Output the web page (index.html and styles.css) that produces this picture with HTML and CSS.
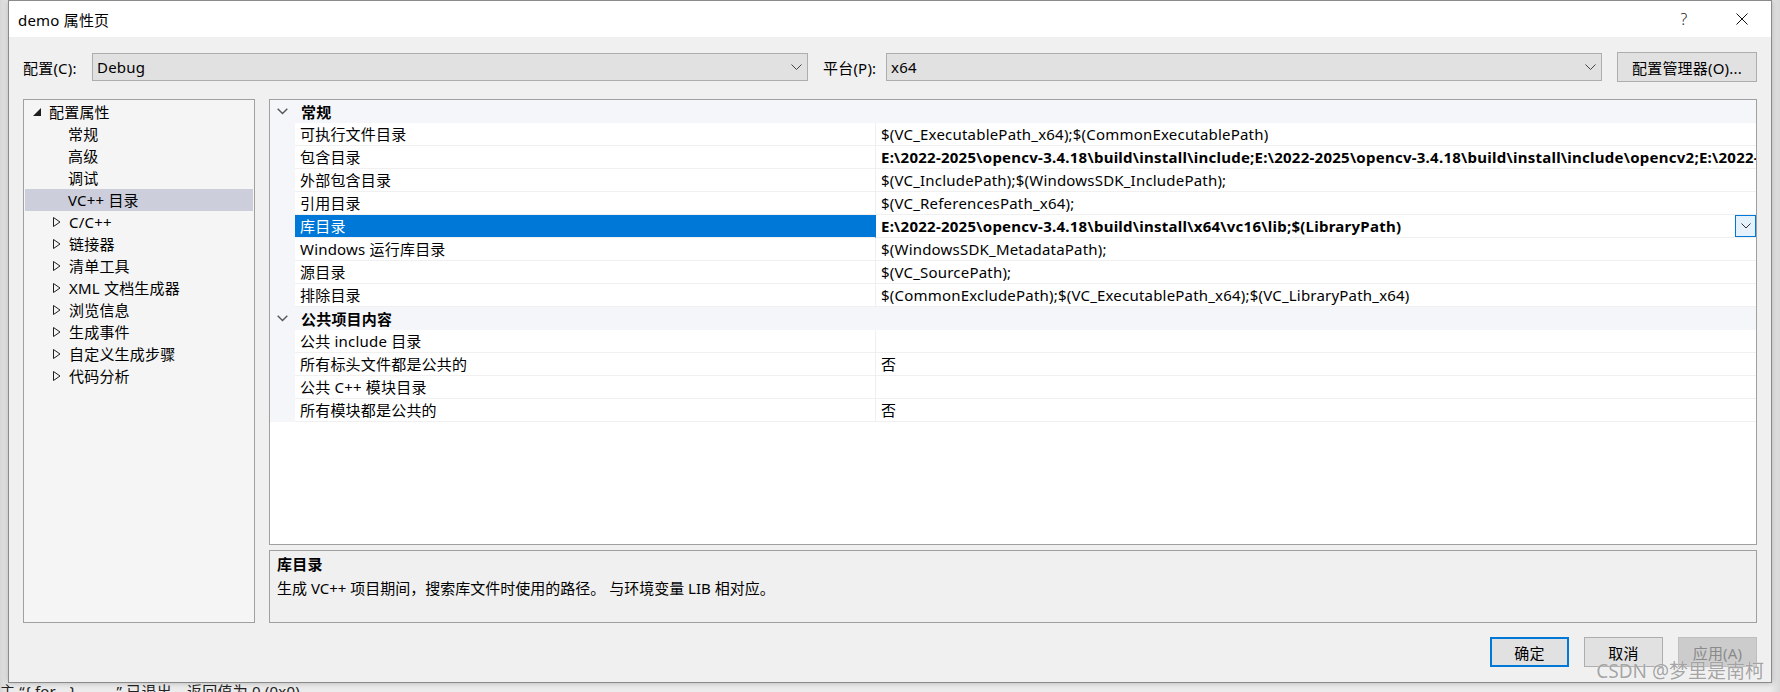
FILE: index.html
```html
<!DOCTYPE html>
<html lang="zh-CN">
<head>
<meta charset="utf-8">
<title>demo 属性页</title>
<link rel="stylesheet" href="styles.css">
</head>
<body>
<div class="screen">
  <div class="dialog">
    <div class="titlebar">
      <span class="title">demo 属性页</span>
      <div class="caption-btns">
        <span class="cap help">?</span>
        <span class="cap close"><svg width="12" height="12" viewBox="0 0 12 12"><path d="M0.5 0.5 L11.5 11.5 M11.5 0.5 L0.5 11.5" stroke="#111" stroke-width="1" fill="none"/></svg></span>
      </div>
    </div>
    <div class="body">
      <div class="toprow">
        <span class="lbl cfg">配置(C):</span>
        <div class="combo"><span>Debug</span><svg width="11" height="6" viewBox="0 0 11 6"><path d="M0.5 0.5 L5.5 5.5 L10.5 0.5" fill="none" stroke="#444" stroke-width="1"/></svg></div>
        <span class="lbl plat">平台(P):</span>
        <div class="combo"><span>x64</span><svg width="11" height="6" viewBox="0 0 11 6"><path d="M0.5 0.5 L5.5 5.5 L10.5 0.5" fill="none" stroke="#444" stroke-width="1"/></svg></div>
        <button class="btn mgr">配置管理器(O)...</button>
      </div>
      <div class="panes">
        <div class="tree">
          <div class="node lv0"><svg class="tri" width="8" height="8" viewBox="0 0 8 8"><path d="M8 0 L8 8 L0 8 Z" fill="#1e1e1e"/></svg><span>配置属性</span></div>
          <div class="node leaf">常规</div>
          <div class="node leaf">高级</div>
          <div class="node leaf">调试</div>
          <div class="node leaf sel">VC++ 目录</div>
          <div class="node lv1"><svg class="tri" width="8" height="10" viewBox="0 0 8 10"><path d="M0.5 0.5 L7 5 L0.5 9.5 Z" fill="none" stroke="#1e1e1e" stroke-width="1"/></svg><span>C/C++</span></div>
          <div class="node lv1"><svg class="tri" width="8" height="10" viewBox="0 0 8 10"><path d="M0.5 0.5 L7 5 L0.5 9.5 Z" fill="none" stroke="#1e1e1e" stroke-width="1"/></svg><span>链接器</span></div>
          <div class="node lv1"><svg class="tri" width="8" height="10" viewBox="0 0 8 10"><path d="M0.5 0.5 L7 5 L0.5 9.5 Z" fill="none" stroke="#1e1e1e" stroke-width="1"/></svg><span>清单工具</span></div>
          <div class="node lv1"><svg class="tri" width="8" height="10" viewBox="0 0 8 10"><path d="M0.5 0.5 L7 5 L0.5 9.5 Z" fill="none" stroke="#1e1e1e" stroke-width="1"/></svg><span>XML 文档生成器</span></div>
          <div class="node lv1"><svg class="tri" width="8" height="10" viewBox="0 0 8 10"><path d="M0.5 0.5 L7 5 L0.5 9.5 Z" fill="none" stroke="#1e1e1e" stroke-width="1"/></svg><span>浏览信息</span></div>
          <div class="node lv1"><svg class="tri" width="8" height="10" viewBox="0 0 8 10"><path d="M0.5 0.5 L7 5 L0.5 9.5 Z" fill="none" stroke="#1e1e1e" stroke-width="1"/></svg><span>生成事件</span></div>
          <div class="node lv1"><svg class="tri" width="8" height="10" viewBox="0 0 8 10"><path d="M0.5 0.5 L7 5 L0.5 9.5 Z" fill="none" stroke="#1e1e1e" stroke-width="1"/></svg><span>自定义生成步骤</span></div>
          <div class="node lv1"><svg class="tri" width="8" height="10" viewBox="0 0 8 10"><path d="M0.5 0.5 L7 5 L0.5 9.5 Z" fill="none" stroke="#1e1e1e" stroke-width="1"/></svg><span>代码分析</span></div>
        </div>
        <div class="right">
          <div class="grid">
            <div class="row hdr"><span class="gut"><svg width="11" height="7" viewBox="0 0 11 7"><path d="M0.7 0.7 L5.5 5.5 L10.3 0.7" fill="none" stroke="#555" stroke-width="1.4"/></svg></span><span class="htext">常规</span></div>
            <div class="row prop"><span class="gut"></span><span class="name">可执行文件目录</span><span class="val"><span class="vt">$(VC_ExecutablePath_x64);$(CommonExecutablePath)</span></span></div>
            <div class="row prop"><span class="gut"></span><span class="name">包含目录</span><span class="val"><span class="vt b">E:\2022-2025\opencv-3.4.18\build\install\include;E:\2022-2025\opencv-3.4.18\build\install\include\opencv2;E:\2022-2025\opencv-3.4.18\build\install\include\opencv2\opencv;$(IncludePath)</span></span></div>
            <div class="row prop"><span class="gut"></span><span class="name">外部包含目录</span><span class="val"><span class="vt">$(VC_IncludePath);$(WindowsSDK_IncludePath);</span></span></div>
            <div class="row prop"><span class="gut"></span><span class="name">引用目录</span><span class="val"><span class="vt">$(VC_ReferencesPath_x64);</span></span></div>
            <div class="row prop"><span class="gut"></span><span class="name sel">库目录</span><span class="val"><span class="vt b">E:\2022-2025\opencv-3.4.18\build\install\x64\vc16\lib;$(LibraryPath)</span><span class="ddbtn"><svg width="10" height="6" viewBox="0 0 10 6"><path d="M0.5 0.5 L5 5 L9.5 0.5" fill="none" stroke="#333" stroke-width="1"/></svg></span></span></div>
            <div class="row prop"><span class="gut"></span><span class="name">Windows 运行库目录</span><span class="val"><span class="vt">$(WindowsSDK_MetadataPath);</span></span></div>
            <div class="row prop"><span class="gut"></span><span class="name">源目录</span><span class="val"><span class="vt">$(VC_SourcePath);</span></span></div>
            <div class="row prop"><span class="gut"></span><span class="name">排除目录</span><span class="val"><span class="vt">$(CommonExcludePath);$(VC_ExecutablePath_x64);$(VC_LibraryPath_x64)</span></span></div>
            <div class="row hdr"><span class="gut"><svg width="11" height="7" viewBox="0 0 11 7"><path d="M0.7 0.7 L5.5 5.5 L10.3 0.7" fill="none" stroke="#555" stroke-width="1.4"/></svg></span><span class="htext">公共项目内容</span></div>
            <div class="row prop"><span class="gut"></span><span class="name">公共 include 目录</span><span class="val"><span class="vt"></span></span></div>
            <div class="row prop"><span class="gut"></span><span class="name">所有标头文件都是公共的</span><span class="val"><span class="vt">否</span></span></div>
            <div class="row prop"><span class="gut"></span><span class="name">公共 C++ 模块目录</span><span class="val"><span class="vt"></span></span></div>
            <div class="row prop"><span class="gut"></span><span class="name">所有模块都是公共的</span><span class="val"><span class="vt">否</span></span></div>
          </div>
          <div class="desc">
            <div class="dtitle">库目录</div>
            <div class="dtext">生成 VC++ 项目期间，搜索库文件时使用的路径。 与环境变量 LIB 相对应。</div>
          </div>
        </div>
      </div>
      <div class="actions">
        <button class="btn act ok">确定</button>
        <button class="btn act">取消</button>
        <button class="btn act off">应用(A)</button>
      </div>
    </div>
    <div class="watermark">CSDN @梦里是南柯</div>
  </div>
  <div class="under">主 “{ for… }&nbsp;&nbsp;&nbsp;&nbsp;&nbsp;&nbsp;&nbsp;&nbsp;&nbsp;&nbsp;” 已退出，返回值为 0 (0x0)</div>
</div>
</body>
</html>
```
FILE: styles.css
```css
html, body {
  margin: 0;
  padding: 0;
}
body {
  background: #e4e4e4;
  font-family: "Noto Sans", "Noto Sans CJK SC", sans-serif;
  font-size: 15px;
  letter-spacing: 0.2px;
  color: #000;
}
.screen {
  width: 1780px;
  height: 692px;
  overflow: hidden;
  padding-left: 8px;
  box-sizing: border-box;
  background: linear-gradient(90deg, #d6d6d6 0, #ececec 8px, #ececec 1770px, #d8d8d8 1780px);
}
.dialog {
  width: 1764px;
  height: 683px;
  box-sizing: border-box;
  border: 1px solid #8a8a8a;
  background: #f0f0f0;
  display: flex;
  flex-direction: column;
  position: relative;
  box-shadow: 0 0 6px rgba(0, 0, 0, 0.25);
}
.titlebar {
  height: 36px;
  flex: none;
  background: #fff;
  display: flex;
  align-items: center;
}
.title {
  padding-left: 9px;
  font-size: 15px;
}
.caption-btns {
  margin-left: auto;
  margin-right: 6px;
  display: flex;
  gap: 12px;
}
.cap {
  width: 46px;
  height: 36px;
  display: flex;
  align-items: center;
  justify-content: center;
}
.help {
  font-size: 16px;
  font-weight: 300;
  color: #222;
}
.body {
  flex: 1;
  min-height: 0;
  padding: 15px 14px 15px 14px;
  display: flex;
  flex-direction: column;
}
.toprow {
  height: 30px;
  flex: none;
  display: flex;
  align-items: center;
}
.lbl.cfg { width: 69px; flex: none; }
.lbl.plat { width: 63px; margin-left: 15px; flex: none; }
.combo {
  flex: 1;
  height: 28px;
  box-sizing: border-box;
  border: 1px solid #adadad;
  background: #e1e1e1;
  display: flex;
  align-items: center;
  padding: 0 5px 0 4px;
}
.combo svg { margin-left: auto; }
.btn {
  font: inherit;
  letter-spacing: inherit;
  color: #000;
  height: 30px;
  box-sizing: border-box;
  border: 1px solid #adadad;
  background: #e1e1e1;
  padding: 0;
}
.mgr {
  width: 140px;
  margin-left: 15px;
  flex: none;
}
.panes {
  margin-top: 17px;
  height: 524px;
  flex: none;
  display: flex;
  gap: 14px;
}
.tree {
  width: 232px;
  flex: none;
  box-sizing: border-box;
  border: 1px solid #a0a0a0;
  background: #f5f5f5;
  padding: 1px;
}
.node {
  height: 22px;
  line-height: 22px;
  display: flex;
  align-items: center;
  white-space: nowrap;
}
.node .tri { flex: none; margin-right: 8px; }
.node.lv0 { padding-left: 8px; }
.node.lv1 { padding-left: 28px; }
.node.leaf { padding-left: 43px; }
.node.sel { background: #cccedb; }
.right {
  flex: 1;
  min-width: 0;
  display: flex;
  flex-direction: column;
  gap: 5px;
}
.grid {
  height: 446px;
  flex: none;
  box-sizing: border-box;
  border: 1px solid #a0a0a0;
  background: #fff;
  overflow: hidden;
}
.row {
  height: 23px;
  display: flex;
  white-space: nowrap;
}
.row.hdr {
  background: #f4f6fa;
  align-items: center;
  font-weight: 700;
}
.hdr .gut {
  width: 25px;
  flex: none;
  display: flex;
  align-items: center;
  padding-left: 7px;
  box-sizing: border-box;
}
.hdr .htext { padding-left: 6px; }
.prop .gut {
  width: 25px;
  flex: none;
  background: #f4f6fa;
}
.prop .name {
  width: 581px;
  flex: none;
  box-sizing: border-box;
  border-right: 1px solid #f0f0f0;
  border-bottom: 1px solid #f0f0f0;
  padding-left: 5px;
  line-height: 22px;
  overflow: hidden;
}
.prop .name.sel {
  background: #0078d7;
  color: #fff;
  border-right-color: #0078d7;
}
.prop .val {
  flex: 1;
  min-width: 0;
  display: flex;
  border-bottom: 1px solid #f0f0f0;
}
.vt {
  flex: 1;
  min-width: 0;
  overflow: hidden;
  padding-left: 5px;
  line-height: 22px;
}
.vt.b { font-weight: 700; letter-spacing: 0.25px; }
.ddbtn {
  width: 21px;
  height: 22px;
  flex: none;
  box-sizing: border-box;
  border: 1px solid #0078d7;
  background: #e5f1fb;
  display: flex;
  align-items: center;
  justify-content: center;
}
.desc {
  flex: 1;
  box-sizing: border-box;
  border: 1px solid #a0a0a0;
  background: #f0f0f0;
  padding: 1px 7px;
  line-height: 24px;
}
.dtitle { font-weight: 700; }
.dtext { letter-spacing: 0; }
.actions {
  margin-top: 14px;
  height: 30px;
  flex: none;
  display: flex;
  justify-content: flex-end;
  gap: 15px;
}
.act { width: 79px; }
.act.ok { border: 2px solid #0078d7; }
.act.off {
  background: #cccccc;
  border-color: #bfbfbf;
  color: #8a8a8a;
}
.watermark {
  position: absolute;
  right: 7px;
  bottom: 0;
  font-size: 19px;
  line-height: 22px;
  letter-spacing: 0;
  color: rgba(140, 140, 140, 0.8);
  text-shadow: 0 0 1px #fff;
  pointer-events: none;
}
.under {
  height: 9px;
  overflow: hidden;
  margin-left: -8px;
  font-size: 15px;
  line-height: 17px;
  color: #222;
  white-space: nowrap;
}
```
